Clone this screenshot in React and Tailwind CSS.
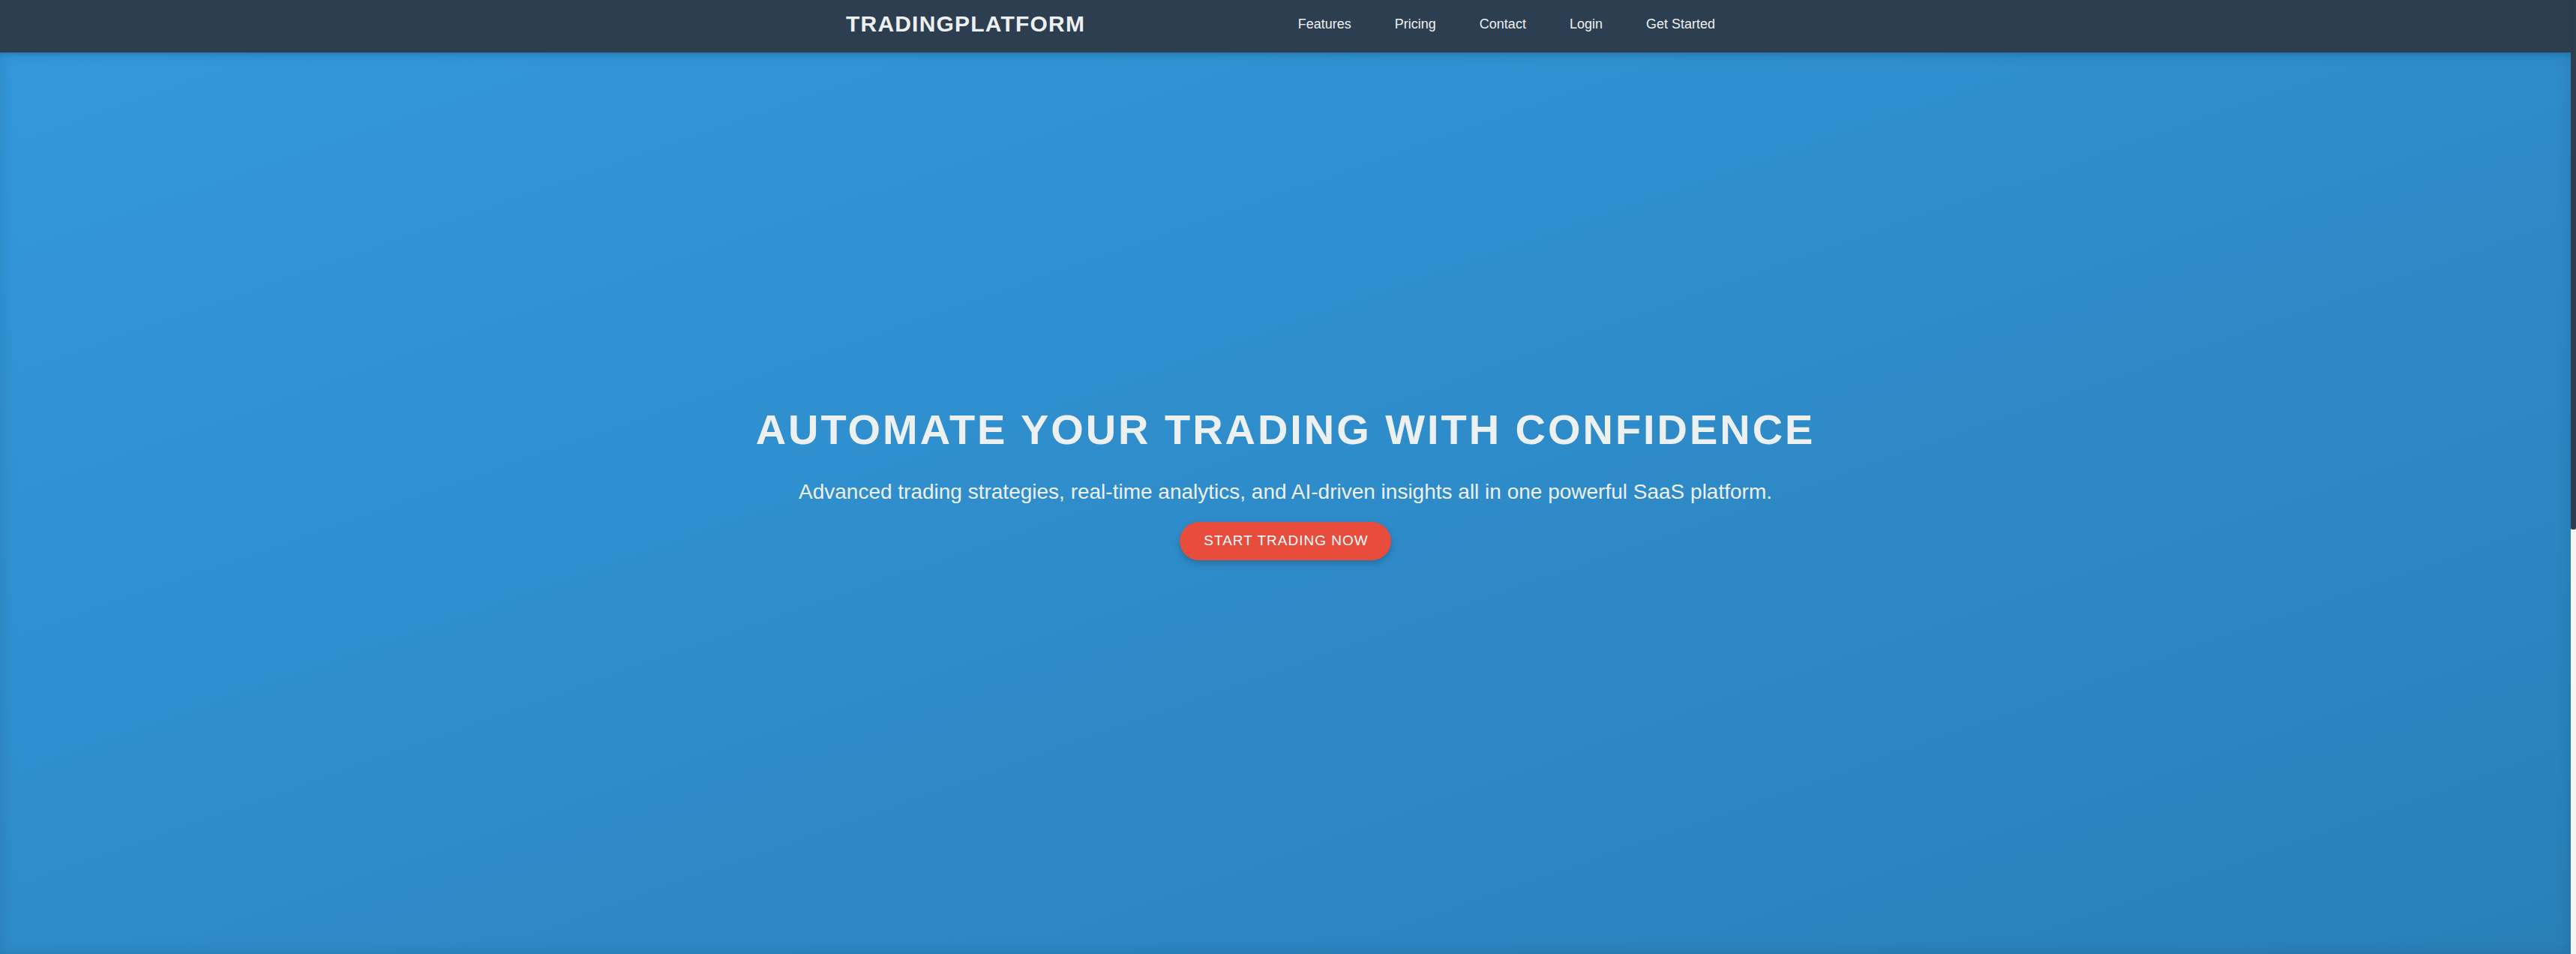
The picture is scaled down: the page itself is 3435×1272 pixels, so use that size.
import React from "react";

export default function App() {
  const font = { fontFamily: '"Liberation Sans", Arial, sans-serif' };
  return (
    <div className="flex h-[1272px] w-[3435px] overflow-hidden" style={font}>
      <div className="flex w-[3428px] flex-col">
        <header className="relative z-10 flex h-[70px] shrink-0 items-center bg-[#2c3e50] pb-[6px] shadow-[0_2px_6px_rgba(0,0,0,0.15)]">
          <div className="mx-auto flex w-[1172px] items-center justify-between pr-[13px]">
            <div className="text-[30px] font-bold leading-none tracking-[1.2px] text-[#ecf0f1]">TRADINGPLATFORM</div>
            <nav className="flex items-center gap-[58px] text-[18px] leading-none text-[#ecf0f1]">
              <a>Features</a>
              <a>Pricing</a>
              <a>Contact</a>
              <a>Login</a>
              <a>Get Started</a>
            </nav>
          </div>
        </header>
        <section className="flex flex-1 flex-col items-center bg-gradient-to-br from-[#3498db] to-[#2980b9] pt-[471px] text-center text-[#ecf0f1] shadow-[inset_0_0_20px_rgba(0,0,0,0.12)]">
          <h1 className="text-[56px] font-bold leading-[64px] tracking-[2.95px]">AUTOMATE YOUR TRADING WITH CONFIDENCE</h1>
          <p className="mt-[34px] text-[28px] leading-[34px]">
            Advanced trading strategies, real-time analytics, and AI-driven insights all in one powerful SaaS platform.
          </p>
          <button className="mt-[23px] flex h-[51px] w-[282px] items-center justify-center rounded-full bg-[#e74c3c] pl-[2px] text-[19px] tracking-[1px] text-white shadow-[0_4px_10px_rgba(0,0,0,0.2)]" style={font}>
            START TRADING NOW
          </button>
        </section>
      </div>
      <div className="flex w-[7px] flex-col bg-[#f5f5f5]">
        <div className="h-[706px] rounded-b-[2px] bg-[#2c3e50]" />
      </div>
    </div>
  );
}
